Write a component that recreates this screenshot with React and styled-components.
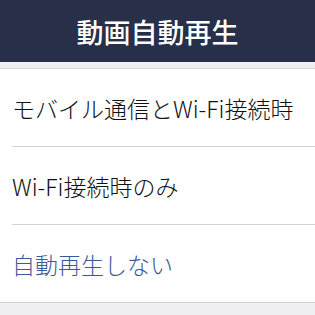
import React from "react";
import styled, { createGlobalStyle } from "styled-components";

const GlobalStyle = createGlobalStyle`
  html, body {
    margin: 0;
    padding: 0;
    background: #efeff4;
  }
  body {
    font-family: "Noto Sans CJK JP", "Noto Sans", sans-serif;
  }
`;

const Page = styled.div`
  width: 315px;
  height: 315px;
  display: flex;
  flex-direction: column;
  background: #efeff4;
  overflow: hidden;
`;

const Header = styled.header`
  height: 62px;
  flex-shrink: 0;
  background: #283049;
  display: flex;
  align-items: center;
  justify-content: center;

  h1 {
    margin: 0;
    color: #ffffff;
    font-size: 27px;
    font-weight: 500;
    letter-spacing: 0;
  }
`;

const Spacer = styled.div`
  height: 6px;
  flex-shrink: 0;
  background: #efeff4;
  border-bottom: 1px solid #d6d6da;
`;

const List = styled.ul`
  list-style: none;
  margin: 0;
  padding: 0 0 0 12px;
  background: #ffffff;
  border-bottom: 1px solid #cfcfd4;
`;

const Row = styled.li`
  height: 77px;
  display: flex;
  align-items: center;
  padding-right: 8px;
  border-bottom: ${(p) => (p.$last ? "none" : "1px solid #d2d2d6")};
  font-size: 23px;
  font-weight: 300;
  color: ${(p) => (p.$selected ? "#3b5998" : "#111111")};
  white-space: nowrap;
`;

const options = [
  { label: "モバイル通信とWi-Fi接続時" },
  { label: "Wi-Fi接続時のみ" },
  { label: "自動再生しない", selected: true },
];

export default function App() {
  return (
    <>
      <GlobalStyle />
      <Page>
        <Header>
          <h1>動画自動再生</h1>
        </Header>
        <Spacer />
        <List>
          {options.map((item, index) => (
            <Row
              key={index}
              $selected={item.selected}
              $last={index === options.length - 1}
            >
              {item.label}
            </Row>
          ))}
        </List>
      </Page>
    </>
  );
}
